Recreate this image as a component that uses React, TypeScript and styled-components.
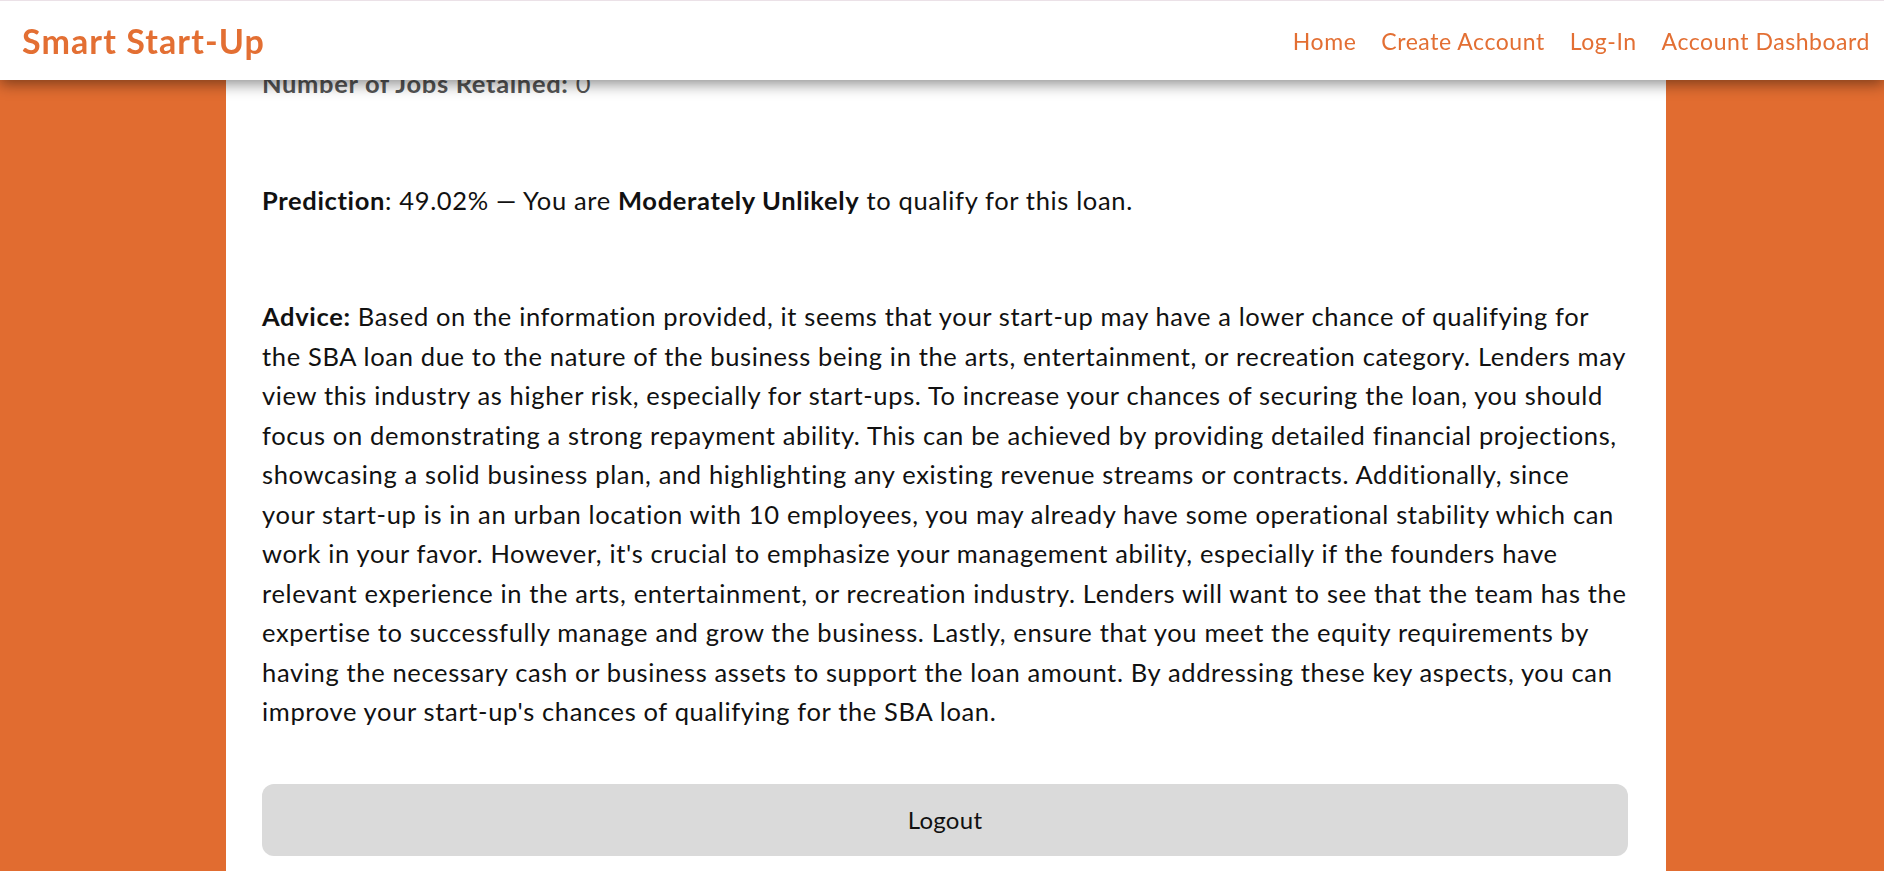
import React from "react";
import styled, { createGlobalStyle } from "styled-components";

const Global = createGlobalStyle`
  html, body { margin: 0; padding: 0; }
  body {
    background: #e16c30;
    font-family: Lato, "Liberation Sans", sans-serif;
    color: #111;
    overflow: hidden;
  }
`;

const Header = styled.header`
  position: fixed;
  top: 0;
  left: 0;
  right: 0;
  height: 79px;
  background: #ffffff;
  border-top: 1px solid #ebe1e7;
  box-shadow: 0 4px 14px rgba(0, 0, 0, 0.45);
  display: flex;
  align-items: center;
  justify-content: space-between;
  padding: 0 14px 0 22px;
  z-index: 10;
`;

const Logo = styled.div`
  color: #e36f33;
  font-size: 34px;
  font-weight: 700;
  letter-spacing: 1.1px;
`;

const Nav = styled.nav`
  display: flex;
  gap: 25px;
`;

const NavLink = styled.a`
  color: #e36f33;
  font-size: 23px;
  letter-spacing: 0.55px;
  text-decoration: none;
`;

const Panel = styled.main`
  margin: 0 218px 0 226px;
  background: #ffffff;
  min-height: 871px;
  padding: 64px 38px 40px 36px;
  box-sizing: border-box;
`;

const Para = styled.p<{ $gapAfter?: number }>`
  margin: 0 0 ${(p) => p.$gapAfter ?? 0}px 0;
  font-size: 25.5px;
  line-height: 39.5px;
  letter-spacing: 0.65px;
`;

const Muted = styled(Para)`
  color: #555;
`;

const LogoutButton = styled.button`
  display: block;
  width: 100%;
  height: 72px;
  margin-top: 52px;
  border: none;
  border-radius: 12px;
  background: #dadada;
  color: #111;
  font-family: Lato, "Liberation Sans", sans-serif;
  font-size: 24px;
  letter-spacing: 0.3px;
`;

export default function App() {
  return (
    <>
      <Global />
      <Header>
        <Logo>Smart Start-Up</Logo>
        <Nav>
          <NavLink href="#">Home</NavLink>
          <NavLink href="#">Create Account</NavLink>
          <NavLink href="#">Log-In</NavLink>
          <NavLink href="#">Account Dashboard</NavLink>
        </Nav>
      </Header>
      <Panel>
        <Muted $gapAfter={77}>
          <b>Number of Jobs Retained:</b> 0
        </Muted>
        <Para $gapAfter={77}>
          <b>Prediction</b>: 49.02% — You are <b>Moderately Unlikely</b> to qualify for this loan.
        </Para>
        <Para>
          <b>Advice:</b> Based on the information provided, it seems that your start-up may have a lower
          chance of qualifying for the SBA loan due to the nature of the business being in the arts,
          entertainment, or recreation category. Lenders may view this industry as higher risk,
          especially for start-ups. To increase your chances of securing the loan, you should focus on
          demonstrating a strong repayment ability. This can be achieved by providing detailed
          financial projections, showcasing a solid business plan, and highlighting any existing
          revenue streams or contracts. Additionally, since your start-up is in an urban location with
          10 employees, you may already have some operational stability which can work in your favor.
          However, it's crucial to emphasize your management ability, especially if the founders have
          relevant experience in the arts, entertainment, or recreation industry. Lenders will want to
          see that the team has the expertise to successfully manage and grow the business. Lastly,
          ensure that you meet the equity requirements by having the necessary cash or business assets
          to support the loan amount. By addressing these key aspects, you can improve your
          start-up's chances of qualifying for the SBA loan.
        </Para>
        <LogoutButton>Logout</LogoutButton>
      </Panel>
    </>
  );
}
